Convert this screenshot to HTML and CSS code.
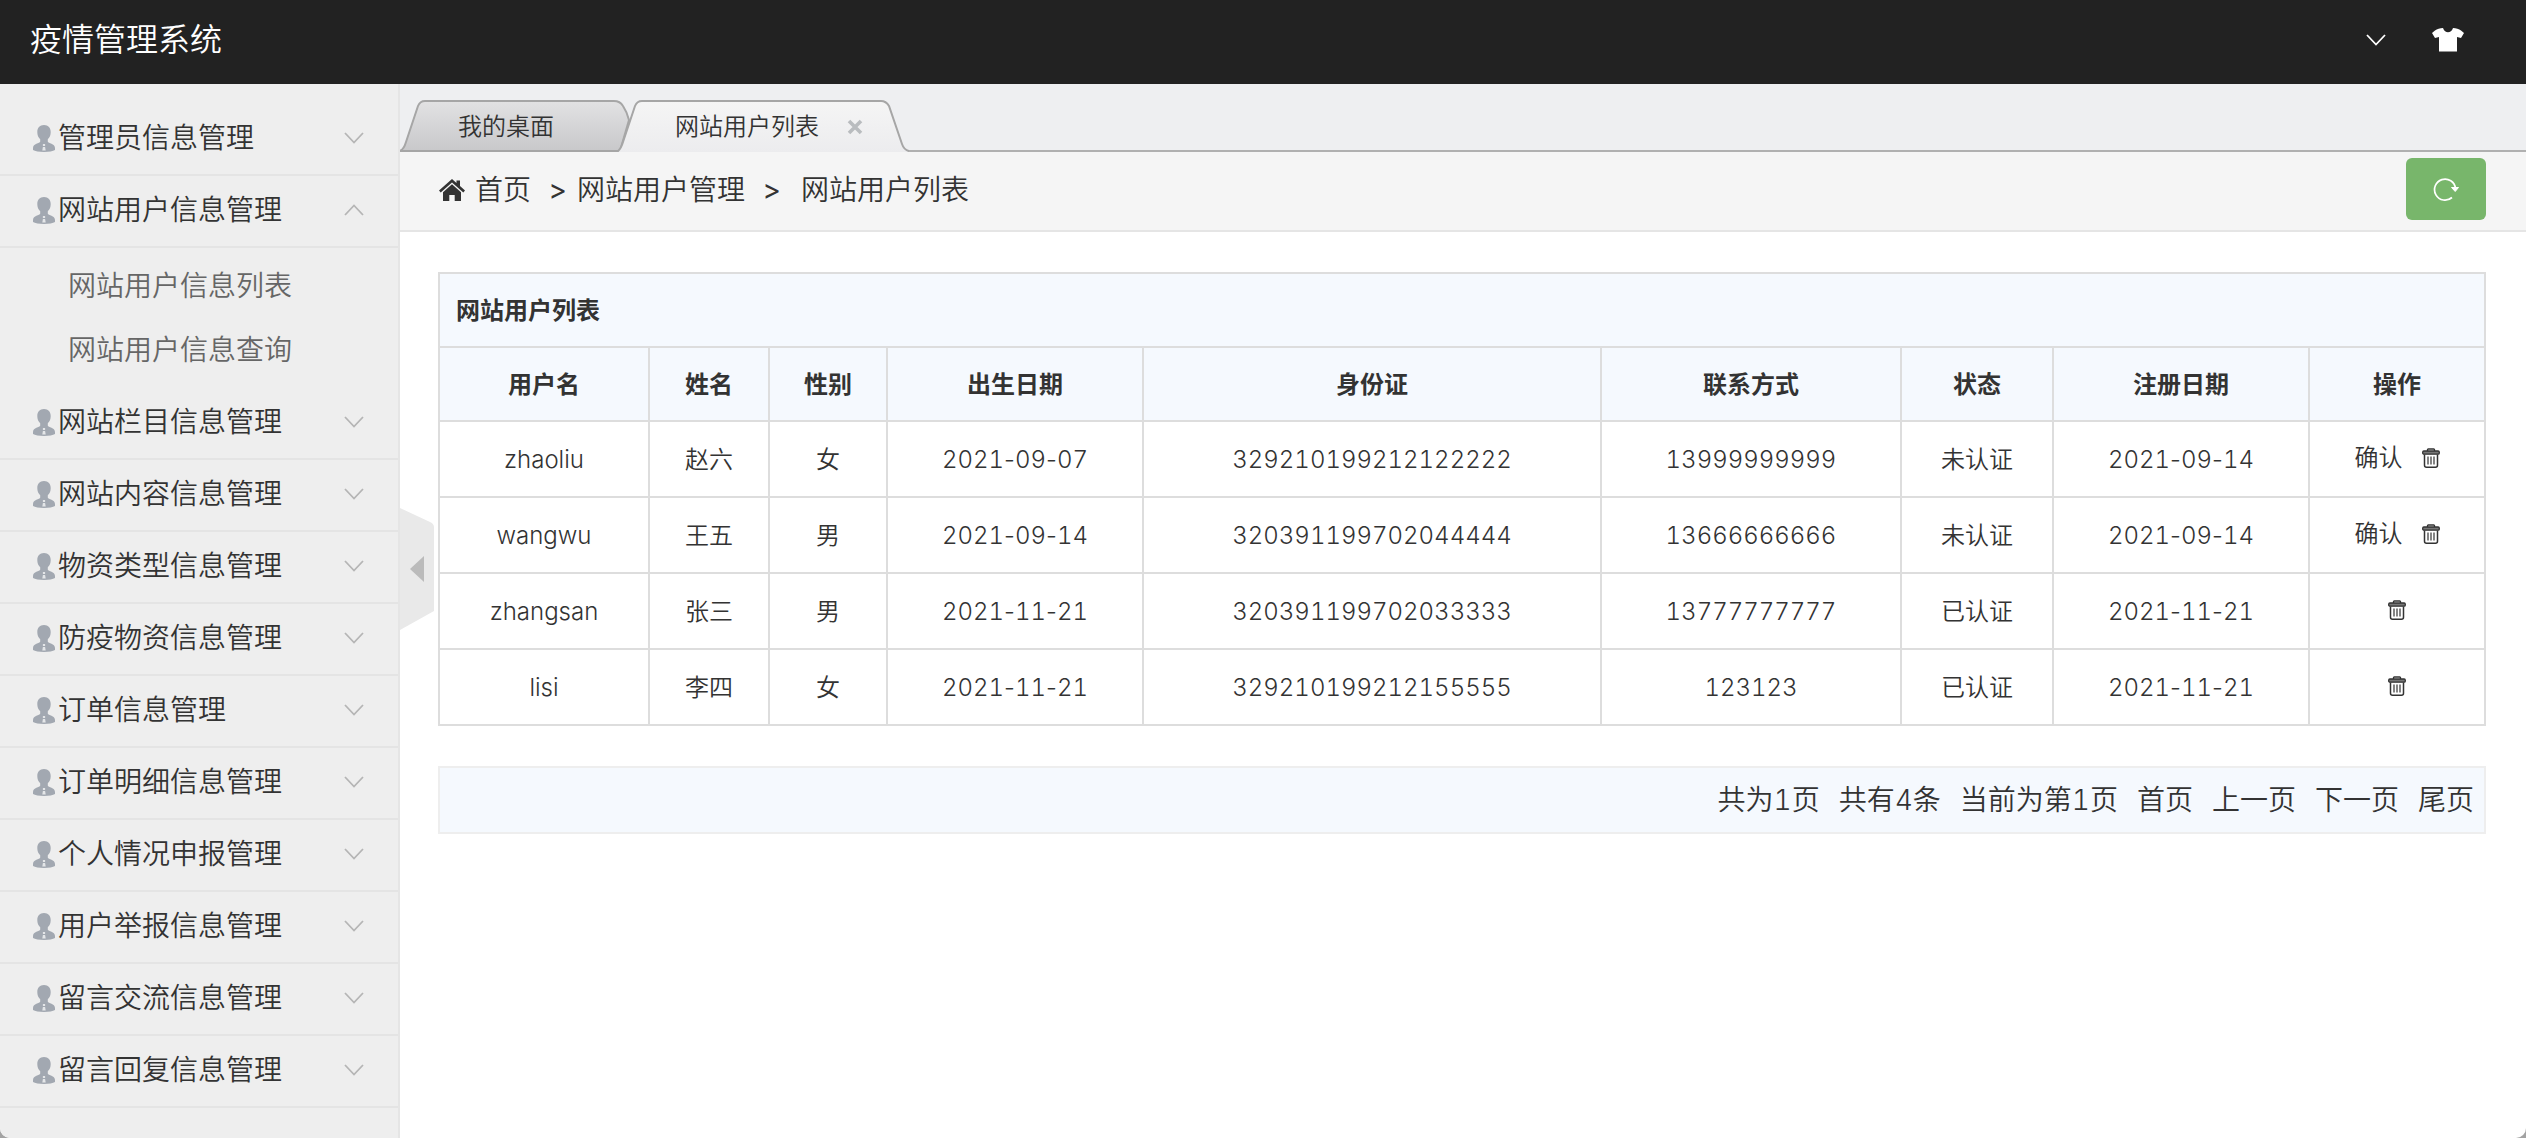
FILE: index.html
```html
<!DOCTYPE html>
<html lang="zh-CN">
<head>
<meta charset="utf-8">
<title>疫情管理系统</title>
<link rel="stylesheet" href="styles.css">
</head>
<body>
<svg class="sprite" aria-hidden="true">
  <symbol id="user" viewBox="0 0 22 27"><path d="M11 0C6.600 0 4.300 3 4.300 7c0 3.200 1 5.600 2.900 7.200v2.600C6.800 18.400 0 18.600 0 23v2c2 1.300 6 2 11 2s9-.7 11-2v-2c0-4.400-6.800-4.600-7.200-6.200v-2.600C16.700 12.600 17.700 10.200 17.700 7 17.700 3 15.400 0 11 0z"/><path d="M9.900 19h2.200v2H9.900zM9.900 22h2.200l.6 3.500H9.300z" fill="#e4e6e8"/></symbol>
  <symbol id="down" viewBox="0 0 20 12"><path d="M1 1l9 9.500L19 1" fill="none" stroke="currentColor" stroke-width="1.800"/></symbol>
  <symbol id="up" viewBox="0 0 20 12"><path d="M1 11l9-9.500L19 11" fill="none" stroke="currentColor" stroke-width="1.800"/></symbol>
  <symbol id="trash" viewBox="0 0 18 20"><path d="M5.500 3V1.800Q5.500 1 6.300 1h5.400q.8 0 .8 .8V3" fill="none" stroke="#333" stroke-width="1.400"/><rect x=".7" y="3" width="16.600" height="3.200" rx="1.200" fill="#777" stroke="#333" stroke-width="1.300"/><path d="M2.500 6.500v10.700q0 2 2 2h9q2 0 2-2V6.500" fill="none" stroke="#333" stroke-width="1.500"/><path d="M6 8.500v8M9 8.500v8M12 8.500v8" stroke="#444" stroke-width="1.300"/></symbol>
</svg>
<div class="shell">
  <header class="topbar">
    <h1 class="brand">疫情管理系统</h1>
    <div class="tools">
      <button class="tool" type="button" aria-label="账户"><svg class="chevron"><use href="#down"/></svg></button>
      <button class="tool" type="button" aria-label="换肤"><svg class="shirt" viewBox="0 0 32 24"><path d="M11 0c1 3 3 4.200 5 4.200S20 3 21 0c3 .2 6 .8 8 2.500L32 5l-3 5-4-1v14.500H7V9l-4 1-3-5 3-2.500C5 .8 8 .2 11 0z"/></svg></button>
    </div>
  </header>
  <div class="body">
    <nav class="sidebar">
      <button class="item" type="button"><svg class="user"><use href="#user"/></svg><span class="label">管理员信息管理</span><svg class="chevron"><use href="#down"/></svg></button>
      <button class="item" type="button"><svg class="user"><use href="#user"/></svg><span class="label">网站用户信息管理</span><svg class="chevron"><use href="#up"/></svg></button>
      <div class="submenu">
        <a class="sublink" href="#list">网站用户信息列表</a>
        <a class="sublink" href="#query">网站用户信息查询</a>
      </div>
      <button class="item" type="button"><svg class="user"><use href="#user"/></svg><span class="label">网站栏目信息管理</span><svg class="chevron"><use href="#down"/></svg></button>
      <button class="item" type="button"><svg class="user"><use href="#user"/></svg><span class="label">网站内容信息管理</span><svg class="chevron"><use href="#down"/></svg></button>
      <button class="item" type="button"><svg class="user"><use href="#user"/></svg><span class="label">物资类型信息管理</span><svg class="chevron"><use href="#down"/></svg></button>
      <button class="item" type="button"><svg class="user"><use href="#user"/></svg><span class="label">防疫物资信息管理</span><svg class="chevron"><use href="#down"/></svg></button>
      <button class="item" type="button"><svg class="user"><use href="#user"/></svg><span class="label">订单信息管理</span><svg class="chevron"><use href="#down"/></svg></button>
      <button class="item" type="button"><svg class="user"><use href="#user"/></svg><span class="label">订单明细信息管理</span><svg class="chevron"><use href="#down"/></svg></button>
      <button class="item" type="button"><svg class="user"><use href="#user"/></svg><span class="label">个人情况申报管理</span><svg class="chevron"><use href="#down"/></svg></button>
      <button class="item" type="button"><svg class="user"><use href="#user"/></svg><span class="label">用户举报信息管理</span><svg class="chevron"><use href="#down"/></svg></button>
      <button class="item" type="button"><svg class="user"><use href="#user"/></svg><span class="label">留言交流信息管理</span><svg class="chevron"><use href="#down"/></svg></button>
      <button class="item" type="button"><svg class="user"><use href="#user"/></svg><span class="label">留言回复信息管理</span><svg class="chevron"><use href="#down"/></svg></button>
    </nav>
    <main class="main">
      <button class="collapse" type="button" aria-label="收起菜单"><svg class="handle" viewBox="0 0 34 122"><path d="M0 0l30 14q4 2 4 5v84L0 122z" fill="#e9e9e9"/><path d="M10 61l14-13v26z" fill="#bbb"/></svg></button>
      <div class="tabs">
        <a class="tab" href="#desktop">
          <svg class="tab-shape" viewBox="0 0 230 52"><defs><linearGradient id="g1" x2="0" y2="1"><stop offset="0" stop-color="#e2e2e3"/><stop offset="1" stop-color="#c8c8ca"/></linearGradient></defs><path d="M0 51Q4 49 6 42L18 6Q20 1 25 1H214Q220 1 223 6Q227 12 229 20L220 51z" fill="url(#g1)" stroke="#a6a6a6" stroke-width="2"/></svg>
          <span class="tab-text">我的桌面</span>
        </a>
        <a class="tab tab-active" href="#list">
          <svg class="tab-shape" viewBox="0 0 292 52"><defs><linearGradient id="g2" x2="0" y2="1"><stop offset="0" stop-color="#f5f5f5"/><stop offset="1" stop-color="#ececee"/></linearGradient></defs><path d="M0 52Q4 49 6 42L18 6Q20 1 25 1H264Q269 1 272 6L285 44Q287 50 292 52z" fill="url(#g2)"/><path d="M0 52Q4 49 6 42L18 6Q20 1 25 1H264Q269 1 272 6L285 44Q287 50 292 51" fill="none" stroke="#a6a6a6" stroke-width="2"/></svg>
          <span class="tab-text">网站用户列表</span>
          <svg class="close" viewBox="0 0 16 16"><path d="M2 2l12 12M14 2L2 14" stroke="#b9bcbf" stroke-width="3.600"/></svg>
        </a>
      </div>
      <div class="crumbs">
        <svg class="home" viewBox="0 0 26 22"><path d="M13 0l4.500 4V1.500H21V7l5 4.500-1.700 2L13 3.500 1.700 13.500 0 11.500z"/><path d="M13 5.300l9 8V22h-6.300v-6h-5.400v6H4v-8.700z"/></svg>
        <a class="crumb first" href="#home">首页</a>
        <span class="sep">&gt;</span>
        <a class="crumb" href="#manage">网站用户管理</a>
        <span class="sep wide">&gt;</span>
        <span class="crumb">网站用户列表</span>
        <button class="refresh" type="button" aria-label="刷新"><svg class="spin" viewBox="0 0 26 24"><path d="M19 20.500A10.500 10.500 0 1 1 22.500 11.500" fill="none" stroke="#fff" stroke-width="1.700"/><path d="M18.500 10.500h7l-3.300 4z" fill="#fff" stroke="#fff"/></svg></button>
      </div>
      <div class="content">
        <table class="grid">
          <colgroup><col class="c-user"><col class="c-name"><col class="c-sex"><col class="c-date"><col><col class="c-phone"><col class="c-state"><col class="c-date"><col class="c-act"></colgroup>
          <thead>
            <tr><th class="caption" colspan="9">网站用户列表</th></tr>
            <tr><th>用户名</th><th>姓名</th><th>性别</th><th>出生日期</th><th>身份证</th><th>联系方式</th><th>状态</th><th>注册日期</th><th>操作</th></tr>
          </thead>
          <tbody>
            <tr><td>zhaoliu</td><td>赵六</td><td>女</td><td><time>2021<i>-</i>09<i>-</i>07</time></td><td>329210199212122222</td><td>13999999999</td><td>未认证</td><td><time>2021<i>-</i>09<i>-</i>14</time></td><td><div class="acts"><a href="#ok">确认</a><a href="#del" aria-label="删除"><svg class="trash"><use href="#trash"/></svg></a></div></td></tr>
            <tr><td>wangwu</td><td>王五</td><td>男</td><td><time>2021<i>-</i>09<i>-</i>14</time></td><td>320391199702044444</td><td>13666666666</td><td>未认证</td><td><time>2021<i>-</i>09<i>-</i>14</time></td><td><div class="acts"><a href="#ok">确认</a><a href="#del" aria-label="删除"><svg class="trash"><use href="#trash"/></svg></a></div></td></tr>
            <tr><td>zhangsan</td><td>张三</td><td>男</td><td><time>2021<i>-</i>11<i>-</i>21</time></td><td>320391199702033333</td><td>13777777777</td><td>已认证</td><td><time>2021<i>-</i>11<i>-</i>21</time></td><td><div class="acts"><a href="#del" aria-label="删除"><svg class="trash"><use href="#trash"/></svg></a></div></td></tr>
            <tr><td>lisi</td><td>李四</td><td>女</td><td><time>2021<i>-</i>11<i>-</i>21</time></td><td>329210199212155555</td><td>123123</td><td>已认证</td><td><time>2021<i>-</i>11<i>-</i>21</time></td><td><div class="acts"><a href="#del" aria-label="删除"><svg class="trash"><use href="#trash"/></svg></a></div></td></tr>
          </tbody>
        </table>
        <div class="pager">
          <span>共为1页</span><span>共有4条</span><span>当前为第1页</span><a href="#p1">首页</a><a href="#prev">上一页</a><a href="#next">下一页</a><a href="#last">尾页</a>
        </div>
      </div>
    </main>
  </div>
</div>
</body>
</html>
```
FILE: styles.css
```css
* { box-sizing: border-box; }
body {
  margin: 0;
  background: #a3a3a3;
  color: #333;
  font: 350 24px/36px Inter, "Noto Sans CJK SC", sans-serif;
  font-variant-numeric: tabular-nums;
}
a { color: inherit; text-decoration: none; }
button { margin: 0; padding: 0; border: 0; background: none; color: inherit; font: inherit; cursor: pointer; }
svg { display: block; flex: none; }
.sprite { position: absolute; width: 0; height: 0; }
.shell { display: flex; flex-direction: column; min-height: 100vh; background: #fff; border-radius: 0 0 10px 10px; overflow: hidden; }

.topbar { display: flex; align-items: center; justify-content: space-between; height: 84px; padding: 0 62px 4px 30px; background: #222; color: #fff; }
.brand { margin: 0; font-size: 32px; font-weight: 350; line-height: 48px; }
.tools { display: flex; align-items: center; gap: 46px; }
.chevron { width: 20px; height: 12px; }
.shirt { width: 32px; height: 24px; fill: #fff; }

.body { display: flex; flex: 1; }
.sidebar { flex: none; width: 400px; padding-top: 20px; background: #eee; border-right: 2px solid #e5e5e5; }
.item { display: flex; align-items: center; width: 100%; height: 72px; padding: 0 34px 2px 33px; border-bottom: 2px solid #e4e4e4; font-size: 28px; line-height: 40px; text-align: left; }
.user { width: 22px; height: 27px; margin-right: 3px; fill: #a2a8b1; }
.label { flex: 1; }
.item .chevron { color: #b5b5b5; }
.submenu { padding: 6px 0; }
.sublink { display: block; padding-left: 68px; color: #666; font-size: 28px; line-height: 64px; }

.main { position: relative; flex: 1; min-width: 0; }
.collapse { position: absolute; left: 0; top: 424px; }
.handle { width: 34px; height: 122px; }
.tabs { display: flex; align-items: flex-end; height: 68px; background: #eeeff1; border-bottom: 2px solid #b0b0b0; }
.tab { position: relative; display: flex; align-items: center; width: 230px; height: 52px; margin-bottom: -2px; padding: 2px 0 0 58px; }
.tab-active { width: 292px; margin-left: -13px; }
.tab-shape { position: absolute; left: 0; top: 0; width: 100%; height: 100%; }
.tab-text, .close { position: relative; }
.close { width: 16px; height: 16px; margin-left: 28px; }
.crumbs { display: flex; align-items: center; height: 80px; padding: 0 40px 2px 39px; background: #f5f5f5; border-bottom: 2px solid #e5e5e5; font-size: 28px; line-height: 40px; }
.home { width: 26px; height: 22px; fill: #333; }
.first { margin-left: 10px; }
.sep { width: 46px; padding-left: 18px; font-weight: 400; }
.wide { width: 56px; }
.refresh { display: flex; align-items: center; justify-content: center; width: 80px; height: 62px; margin: 0 0 2px auto; background: #78b66b; border-radius: 6px; }
.spin { width: 26px; height: 24px; }

.content { padding: 40px 40px 40px 38px; }
.grid { width: 100%; table-layout: fixed; border-collapse: collapse; }
.grid th, .grid td { height: 76px; padding: 2px 0 0; border: 2px solid #ddd; text-align: center; }
.grid th { height: 74px; background: #f5f9fe; font-weight: 700; }
.grid .caption { padding-left: 16px; text-align: left; }
.grid i { font-style: normal; font-variant-numeric: normal; }
.c-user { width: 210px; }
.c-name { width: 120px; }
.c-sex { width: 118px; }
.c-date { width: 256px; }
.c-phone { width: 300px; }
.c-state { width: 152px; }
.c-act { width: 176px; }
.acts { display: flex; align-items: center; justify-content: center; gap: 19px; padding-bottom: 4px; }
.trash { width: 18px; height: 20px; }
.pager { display: flex; align-items: center; justify-content: flex-end; gap: 19px; height: 68px; margin-top: 40px; padding-right: 10px; background: #f5f9fe; border: 2px solid #eee; font-size: 28px; line-height: 40px; }
```
